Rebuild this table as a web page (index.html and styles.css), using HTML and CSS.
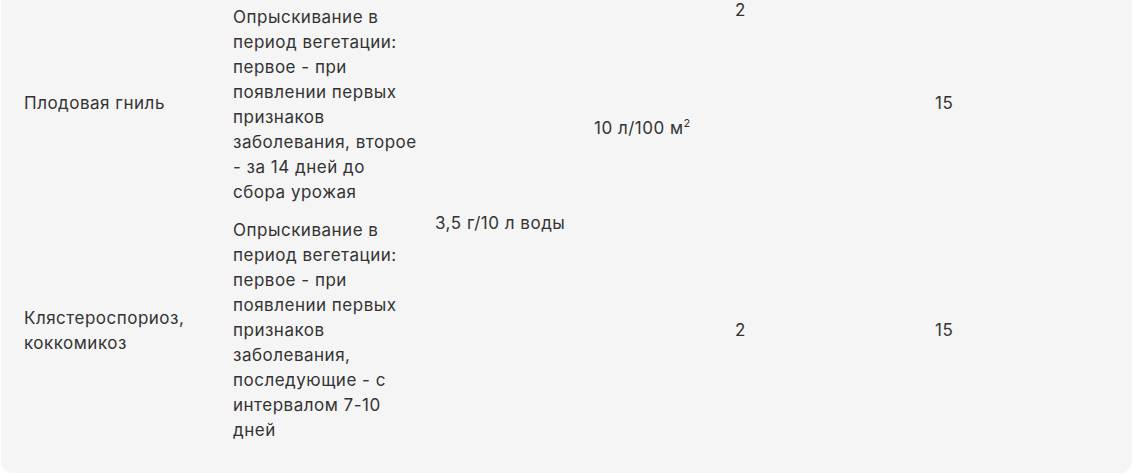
FILE: index.html
```html
<!DOCTYPE html>
<html lang="ru">
<head>
<meta charset="utf-8">
<title>Таблица обработок</title>
<link rel="stylesheet" href="styles.css">
</head>
<body>
<div class="panel">
  <div class="grid">
    <div class="cell c1 r1">Плодовая гниль</div>
    <div class="cell c2 r1 low">Опрыскивание в период вегетации: первое - при появлении первых признаков заболевания, второе - за 14 дней до сбора&nbsp;урожая</div>
    <div class="cell c3 r12 low">3,5 г/10 л воды</div>
    <div class="cell c4 r12 spill">10 л/100 м<sup>2</sup></div>
    <div class="cell c5 r1 top">2</div>
    <div class="cell c6 r1">15</div>

    <div class="cell c1 r2">Клястероспориоз, коккомикоз</div>
    <div class="cell c2 r2">Опрыскивание в период вегетации: первое - при появлении первых признаков заболевания, последующие - с интервалом 7-10 дней</div>
    <div class="cell c5 r2">2</div>
    <div class="cell c6 r2">15</div>
  </div>
</div>
</body>
</html>
```

FILE: styles.css
```css
html, body {
  margin: 0;
  padding: 0;
  background: #ffffff;
}

body {
  font-family: Inter, "Noto Sans", sans-serif;
  font-size: 17px;
  letter-spacing: 0.5px;
  line-height: 25px;
  color: #333333;
}

.panel {
  margin: 0 1px 1px 1px;
  background: #f5f5f5;
  border-radius: 0 0 12px 12px;
  padding: 0 0 24px 23px;
}

/* the table continues above the visible area */
.grid {
  display: grid;
  grid-template-columns: 209px 202px 159px 141px 200px 1fr;
  grid-template-rows: 218px auto;
  margin-top: -6px;
}

.cell {
  padding: 6px 14px 6px 0;
  align-self: center;
}

.c1 { grid-column: 1; }
.c2 { grid-column: 2; }
.c3 { grid-column: 3; }
.c4 { grid-column: 4; }
.c5 { grid-column: 5; }
.c6 { grid-column: 6; }

.r1 { grid-row: 1; }
.r2 { grid-row: 2; }
.r12 { grid-row: 1 / 3; }

.cell.low {
  padding-top: 10px;
  padding-bottom: 6px;
}

.cell.top {
  align-self: start;
  padding-top: 4px;
}

/* this cell continues a merged cell that begins in rows above the visible area */
.cell.spill { padding-bottom: 193px; }

sup {
  font-size: 11px;
  line-height: 0;
  vertical-align: 7px;
}
```
